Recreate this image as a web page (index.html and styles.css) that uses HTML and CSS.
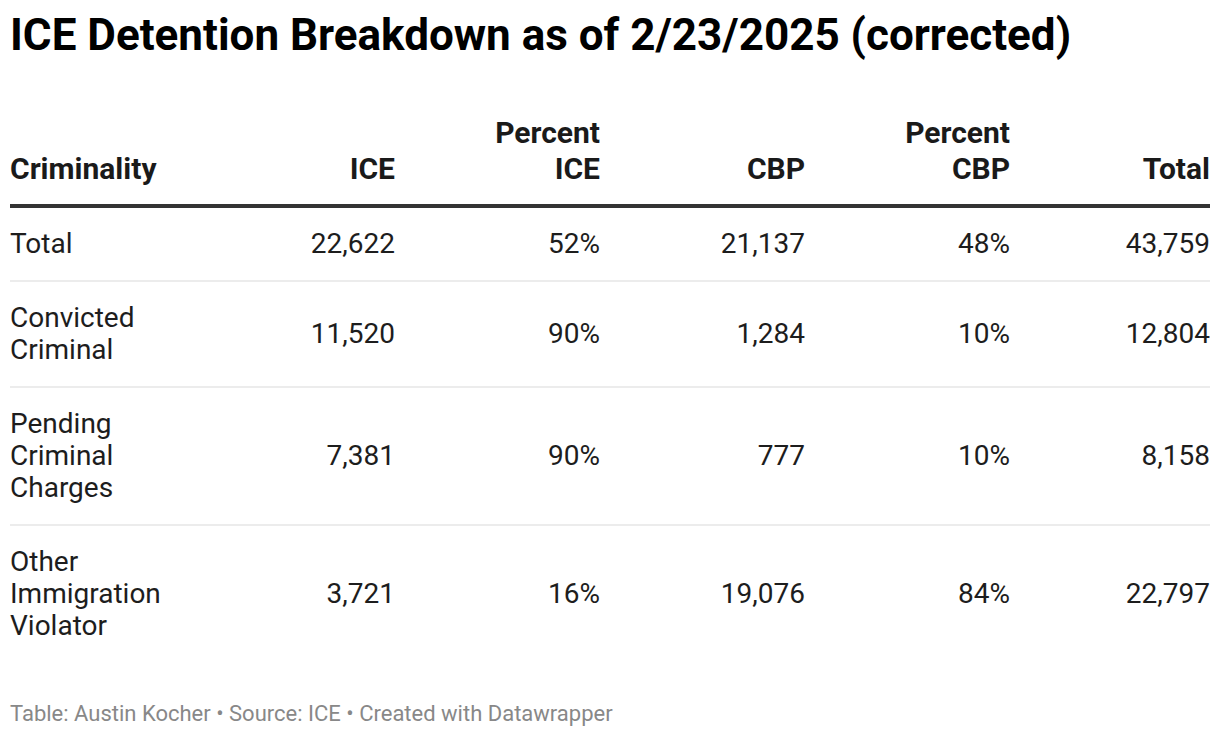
FILE: index.html
```html
<!DOCTYPE html>
<html lang="en">
<head>
<meta charset="utf-8">
<title>ICE Detention Breakdown</title>
<link rel="stylesheet" href="styles.css">
</head>
<body>
<div class="chart">
  <h1 class="title">ICE Detention Breakdown as of 2/23/2025 (corrected)</h1>
  <div class="table">
    <div class="row head">
      <div class="cell first">Criminality</div>
      <div class="cell">ICE</div>
      <div class="cell">Percent<br>ICE</div>
      <div class="cell">CBP</div>
      <div class="cell">Percent<br>CBP</div>
      <div class="cell">Total</div>
    </div>
    <div class="row body">
      <div class="cell first">Total</div>
      <div class="cell">22,622</div>
      <div class="cell">52%</div>
      <div class="cell">21,137</div>
      <div class="cell">48%</div>
      <div class="cell">43,759</div>
    </div>
    <div class="row body">
      <div class="cell first">Convicted<br>Criminal</div>
      <div class="cell">11,520</div>
      <div class="cell">90%</div>
      <div class="cell">1,284</div>
      <div class="cell">10%</div>
      <div class="cell">12,804</div>
    </div>
    <div class="row body">
      <div class="cell first">Pending<br>Criminal<br>Charges</div>
      <div class="cell">7,381</div>
      <div class="cell">90%</div>
      <div class="cell">777</div>
      <div class="cell">10%</div>
      <div class="cell">8,158</div>
    </div>
    <div class="row body last">
      <div class="cell first">Other<br>Immigration<br>Violator</div>
      <div class="cell">3,721</div>
      <div class="cell">16%</div>
      <div class="cell">19,076</div>
      <div class="cell">84%</div>
      <div class="cell">22,797</div>
    </div>
  </div>
  <div class="footer">Table: Austin Kocher • Source: ICE • Created with Datawrapper</div>
</div>
</body>
</html>
```

FILE: styles.css
```css
html, body {
  margin: 0;
  padding: 0;
  background: #ffffff;
}

.chart {
  padding: 10px;
  width: 1200px;
  font-family: Roboto, "Liberation Sans", sans-serif;
}

.title {
  margin: 0;
  font-size: 44px;
  font-weight: 700;
  line-height: 50px;
  color: #000000;
}

.table {
  margin-top: 55px;
}

.row {
  display: grid;
  grid-template-columns: 180px 205px 205px 205px 205px 200px;
}

.cell {
  text-align: right;
}

.cell.first {
  text-align: left;
}

.head {
  align-items: end;
  font-size: 30px;
  font-weight: 700;
  line-height: 36px;
  color: #1a1a1a;
  padding-bottom: 17px;
  border-bottom: 4px solid #333333;
}

.body {
  align-items: center;
  font-size: 28px;
  font-weight: 400;
  line-height: 32px;
  color: #1d1d1d;
  padding: 20px 0;
  border-bottom: 2px solid #ececec;
}

.body.last {
  border-bottom: none;
}

.footer {
  margin-top: 40px;
  font-size: 22px;
  line-height: 24px;
  color: #888888;
}
```
